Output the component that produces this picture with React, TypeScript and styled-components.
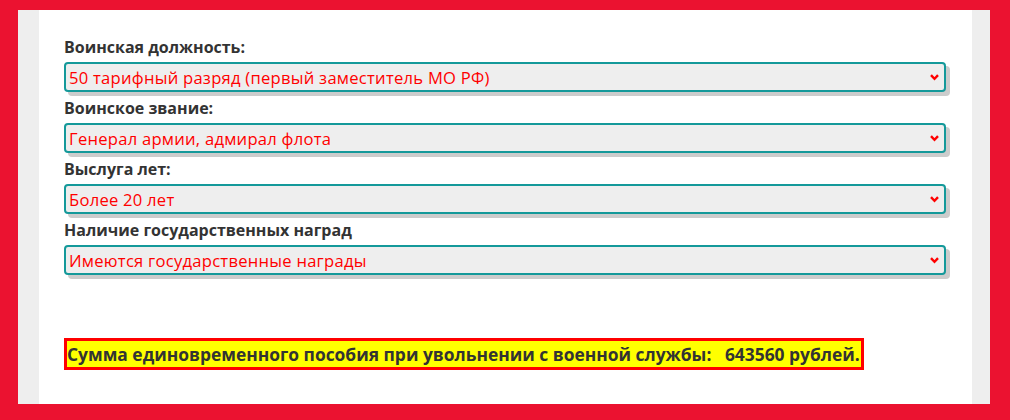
import React from 'react';
import styled, { createGlobalStyle } from 'styled-components';

const GlobalStyle = createGlobalStyle`
  html, body {
    margin: 0;
    padding: 0;
    background: #eb1230;
  }
  body {
    font-family: 'Open Sans', 'Noto Sans', sans-serif;
  }
`;

const Frame = styled.div`
  width: 1010px;
  height: 420px;
  box-sizing: border-box;
  padding: 10px 20px 16px 18px;
  background: #eb1230;
`;

const Page = styled.div`
  height: 100%;
  box-sizing: border-box;
  background: #eeeeee;
  padding: 0 18px 0 21px;
`;

const Content = styled.div`
  height: 100%;
  box-sizing: border-box;
  background: #ffffff;
  padding: 23px 26px 0 25px;
`;

const Field = styled.div`
  display: flex;
  flex-direction: column;
  gap: 1px;
  margin-bottom: 2px;
`;

const Label = styled.label`
  font-size: 16px;
  line-height: 28px;
  font-weight: 700;
  color: #333333;
`;

const SelectWrap = styled.div`
  position: relative;
  height: 30px;
`;

const Select = styled.select`
  appearance: none;
  width: 100%;
  height: 30px;
  box-sizing: border-box;
  border: 2px solid #14999a;
  border-radius: 4px;
  background: #eeeeee;
  box-shadow: 4px 4px 0 #cccccc;
  color: #ff0000;
  font-family: 'Open Sans', 'Noto Sans', sans-serif;
  font-size: 16.6px;
  letter-spacing: 0.25px;
  padding: 0 30px 0 3px;
  outline: none;
`;

const Chevron = styled.svg`
  position: absolute;
  right: 7px;
  top: 12px;
  pointer-events: none;
`;

const Result = styled.div`
  display: inline-block;
  margin-top: 61px;
  border: 3px solid #ff0000;
  background: #ffff00;
  color: #333333;
  font-size: 17.4px;
  font-weight: 700;
  line-height: 26px;
  padding: 0 1px 0 0;
  white-space: pre;
`;

type Option = { label: string; value: string };

type SelectField = {
  name: string;
  title: string;
  options: Option[];
};

const fields: SelectField[] = [
  {
    name: 'position',
    title: 'Воинская должность:',
    options: [{ label: '50 тарифный разряд (первый заместитель МО РФ)', value: '50' }],
  },
  {
    name: 'rank',
    title: 'Воинское звание:',
    options: [{ label: 'Генерал армии, адмирал флота', value: 'general' }],
  },
  {
    name: 'service',
    title: 'Выслуга лет:',
    options: [{ label: 'Более 20 лет', value: '20' }],
  },
  {
    name: 'awards',
    title: 'Наличие государственных наград',
    options: [{ label: 'Имеются государственные награды', value: 'yes' }],
  },
];

const App: React.FC = () => {
  return (
    <>
      <GlobalStyle />
      <Frame>
        <Page>
          <Content>
            {fields.map((field) => (
              <Field key={field.name}>
                <Label htmlFor={field.name}>{field.title}</Label>
                <SelectWrap>
                  <Select id={field.name} defaultValue={field.options[0].value}>
                    {field.options.map((opt) => (
                      <option key={opt.value} value={opt.value}>
                        {opt.label}
                      </option>
                    ))}
                  </Select>
                  <Chevron width="9" height="7" viewBox="0 0 9 7">
                    <path d="M1 1.2 L4.5 4.8 L8 1.2" fill="none" stroke="#ff0000" strokeWidth="2.4" />
                  </Chevron>
                </SelectWrap>
              </Field>
            ))}
            <Result>
              {'Сумма единовременного пособия при увольнении с военной службы:   643560 рублей.'}
            </Result>
          </Content>
        </Page>
      </Frame>
    </>
  );
};

export default App;
